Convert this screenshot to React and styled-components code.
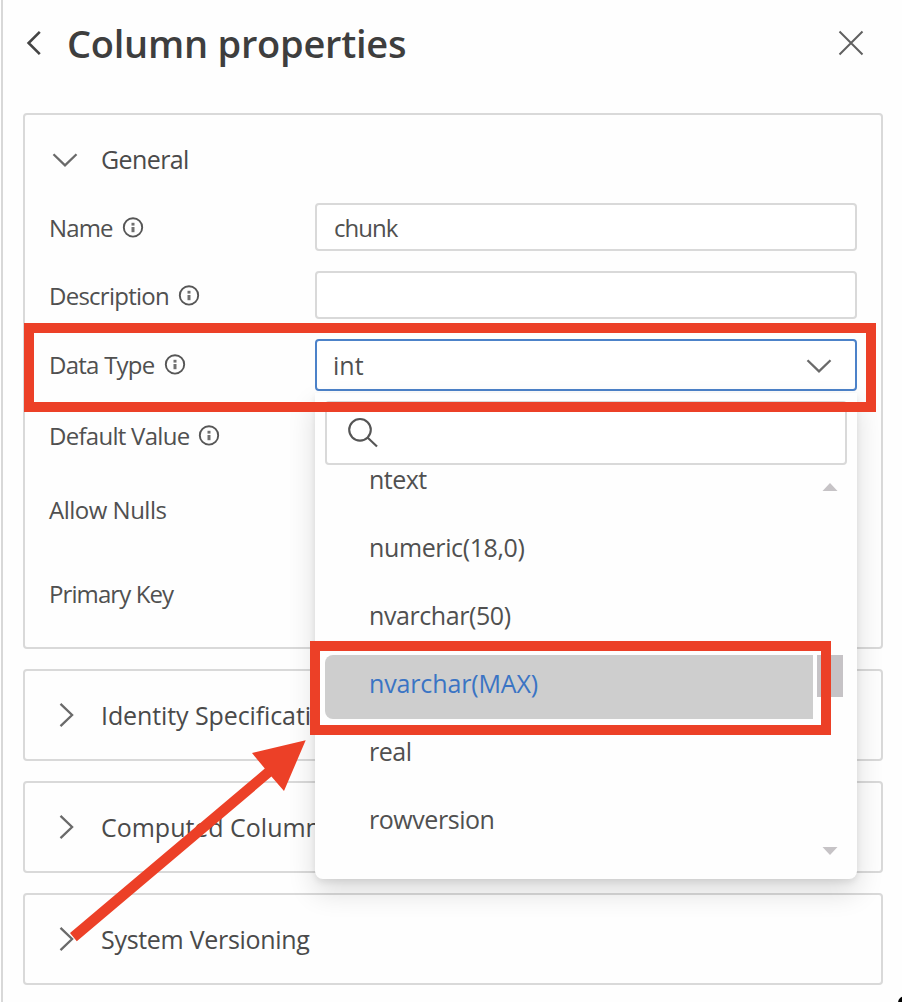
import React from 'react';
import styled, { createGlobalStyle } from 'styled-components';

const RED = '#ec4027';
const LINE = '#d9d9d9';
const FONT = '"Open Sans", "Noto Sans", sans-serif';

const GlobalStyle = createGlobalStyle`
  *, *::before, *::after { box-sizing: border-box; }
  html, body { margin: 0; padding: 0; background: #fff; overflow: hidden; }
`;

const Page = styled.div`
  position: relative;
  width: 902px;
  height: 1002px;
  padding-left: 1px;
  overflow: hidden;
  font-family: ${FONT};
  color: #505050;
`;

const Panel = styled.main`
  height: 100%;
  padding: 0 19px 0 20px;
  border-left: 2px solid #d8d8d8;
  background: #fefefe;
`;

const Text = styled.span`
  flex: none;
  font-size: ${(p) => p.$size || 24}px;
  font-weight: ${(p) => p.$weight || 400};
  letter-spacing: ${(p) => p.$track || 0}px;
  line-height: ${(p) => p.$line || 34}px;
  white-space: pre;
`;

const Header = styled.header`
  display: flex;
  align-items: center;
  height: 113px;
  padding: 0 18px 27px 1px;
  color: #3e3e3e;
`;

const Title = styled.h1`
  flex: 1;
  margin: 0 0 1px 23px;
  font-size: 38px;
  font-weight: 600;
  line-height: 50px;
  letter-spacing: -0.25px;
`;

const IconButton = styled.button`
  display: flex;
  flex: none;
  padding: 0;
  border: 0;
  background: none;
  color: inherit;
`;

const Sections = styled.div`
  display: flex;
  flex-direction: column;
  gap: 20px;
`;

const Card = styled.section`
  width: 860px;
  border: 2px solid ${LINE};
  border-radius: 4px;
  padding: ${(p) => (p.$open ? '0 24px 28px' : '0 24px')};
`;

const CardHeader = styled.div`
  display: flex;
  align-items: center;
  gap: 22px;
  height: 88px;
  overflow: hidden;
  padding: 0 0 ${(p) => p.$lift || 0}px 2px;
  color: #4a4a4a;
`;

const ChevronSlot = styled.span`
  display: flex;
  flex: none;
  width: 28px;
  justify-content: center;
`;

const Field = styled.div`
  display: grid;
  grid-template-columns: 266px 542px;
  align-items: center;
  height: ${(p) => p.$height}px;
  margin-bottom: ${(p) => p.$after}px;
`;

const Label = styled.label`
  display: flex;
  align-items: center;
  gap: 9px;
  padding-top: ${(p) => p.$drop || 0}px;
`;

const Input = styled.div`
  position: relative;
  display: flex;
  align-items: center;
  justify-content: space-between;
  height: 100%;
  padding: ${(p) => (p.$active ? '0 22px 1px 16px' : '2px 24px 0 17px')};
  border: 2px solid ${(p) => (p.$active ? '#4c82c9' : LINE)};
  border-radius: 4px;
  background: #fff;
`;

const Dropdown = styled.div`
  position: absolute;
  z-index: 2;
  top: 52px;
  left: -2px;
  display: flex;
  flex-direction: column;
  width: 542px;
  height: 486px;
  padding: 8px 10px 22px;
  border-radius: 0 0 8px 8px;
  background: #fefefe;
  box-shadow: 0 13px 28px rgba(0, 0, 0, 0.14), 0 3px 6px rgba(0, 0, 0, 0.08);
`;

const Search = styled.div`
  display: flex;
  flex: none;
  align-items: center;
  width: 522px;
  height: 64px;
  padding-left: 20px;
  border: 2px solid ${LINE};
  border-radius: 4px;
  background: #fff;
`;

const ListArea = styled.div`
  display: flex;
  flex: 1;
  gap: 4px;
`;

const Options = styled.div`
  display: flex;
  flex-direction: column;
  gap: 4px;
  width: 488px;
  margin-top: -14px;
`;

const Option = styled.div`
  display: flex;
  flex: none;
  align-items: center;
  height: 64px;
  padding: 0 0 9px 44px;
  border-radius: 8px 0 0 8px;
  background: ${(p) => (p.$selected ? '#cecece' : 'transparent')};
  color: ${(p) => (p.$selected ? '#3a74c4' : 'inherit')};
`;

const Scrollbar = styled.div`
  display: flex;
  flex-direction: column;
  align-items: center;
  justify-content: space-between;
  width: 26px;
  height: 392px;
  padding: 18px 0 2px;
`;

const Thumb = styled.div`
  width: 26px;
  height: 42px;
  margin-bottom: -14px;
  background: #c6c3c6;
`;

const Highlight = styled.div`
  position: absolute;
  z-index: 3;
  top: ${(p) => p.$top}px;
  left: ${(p) => p.$left}px;
  width: ${(p) => p.$width}px;
  height: ${(p) => p.$height}px;
  border: 10px solid ${RED};
  pointer-events: none;
`;

const ArrowOverlay = styled.svg`
  position: absolute;
  z-index: 4;
  top: 735px;
  left: 65px;
  pointer-events: none;
`;

const CornerDot = styled.span`
  position: absolute;
  top: 996px;
  left: 898px;
  width: 14px;
  height: 14px;
  border-radius: 50%;
  background: #000;
`;

const InfoIcon = () => (
  <svg width="22" height="22" viewBox="0 0 22 22">
    <circle cx="11" cy="10.4" r="9.2" fill="none" stroke="#565656" strokeWidth="1.9" />
    <rect x="9.5" y="5.8" width="3" height="2.8" fill="#707070" />
    <rect x="9.5" y="10" width="3" height="5.2" fill="#707070" />
  </svg>
);

const ChevronDown = () => (
  <svg width="28" height="18" viewBox="0 0 28 18" fill="none" stroke="#6a6a6a" strokeWidth="2.3">
    <path d="M2.5 4.2 L14 15.4 L25.5 4.2" />
  </svg>
);

const ChevronRight = () => (
  <svg width="18" height="28" viewBox="0 0 18 28" fill="none" stroke="#6a6a6a" strokeWidth="2.3">
    <path d="M4.5 2.8 L16.1 14 L4.5 25.2" />
  </svg>
);

const ScrollArrow = ({ down }) => (
  <svg width="16" height="8" viewBox="0 0 16 8">
    <path d={down ? 'M0.5 0 H15.5 L8 8 Z' : 'M0.5 8 H15.5 L8 0 Z'} fill="#c6c3c6" />
  </svg>
);

const OPTIONS = [
  ['ntext', -0.5],
  ['numeric(18,0)', -0.38],
  ['nvarchar(50)', -0.42],
  ['nvarchar(MAX)', -0.14],
  ['real', -0.5],
  ['rowversion', -0.45],
];

const SECTIONS = [
  ['Identity Specification', -0.1],
  ['Computed Column', -0.02],
  ['System Versioning', -0.3],
];

function FieldLabel({ text, track, info, drop }) {
  return (
    <Label $drop={drop}>
      <Text $track={track}>{text}</Text>
      {info && <InfoIcon />}
    </Label>
  );
}

function TypeDropdown() {
  return (
    <Dropdown>
      <Search>
        <svg width="32" height="32" viewBox="0 0 32 32" fill="none" stroke="#555" strokeWidth="2.1">
          <circle cx="13" cy="12.8" r="10.8" />
          <path d="M20.5 20.5 L30 29.6" />
        </svg>
      </Search>
      <ListArea>
        <Options>
          {OPTIONS.map(([name, track]) => (
            <Option key={name} $selected={name === 'nvarchar(MAX)'}>
              <Text $size={25} $track={track}>{name}</Text>
            </Option>
          ))}
        </Options>
        <Scrollbar>
          <ScrollArrow />
          <Thumb />
          <ScrollArrow down />
        </Scrollbar>
      </ListArea>
    </Dropdown>
  );
}

export default function App() {
  return (
    <Page>
      <GlobalStyle />
      <Panel>
        <Header>
          <IconButton aria-label="Back">
            <svg width="20" height="28" viewBox="0 0 20 28" fill="none" stroke="#444" strokeWidth="2.6">
              <path d="M15.8 2.8 L4.6 14 L15.8 25.2" />
            </svg>
          </IconButton>
          <Title>Column properties</Title>
          <IconButton aria-label="Close">
            <svg width="28" height="28" viewBox="0 0 28 28" fill="none" stroke="#606060" strokeWidth="2">
              <path d="M2.5 2.5 L25.5 25.5 M25.5 2.5 L2.5 25.5" />
            </svg>
          </IconButton>
        </Header>
        <Sections>
          <Card $open>
            <CardHeader $lift={1}>
              <ChevronSlot><ChevronDown /></ChevronSlot>
              <Text $size={25} $track={-0.6}>General</Text>
            </CardHeader>
            <Field $height={48} $after={20}>
              <FieldLabel text="Name" track={-0.85} info drop={2} />
              <Input><Text $track={-1}>chunk</Text></Input>
            </Field>
            <Field $height={48} $after={20}>
              <FieldLabel text="Description" track={-0.75} info drop={2} />
              <Input />
            </Field>
            <Field $height={52} $after={20}>
              <FieldLabel text="Data Type" track={-0.75} info />
              <Input $active>
                <Text $size={25}>int</Text>
                <ChevronDown />
                <TypeDropdown />
              </Input>
            </Field>
            <Field $height={50} $after={24}>
              <FieldLabel text="Default Value" track={-0.72} info />
            </Field>
            <Field $height={50} $after={34}>
              <FieldLabel text="Allow Nulls" track={-0.5} />
            </Field>
            <Field $height={50} $after={0}>
              <FieldLabel text="Primary Key" track={-0.9} />
            </Field>
          </Card>
          {SECTIONS.map(([name, track]) => (
            <Card key={name}>
              <CardHeader>
                <ChevronSlot><ChevronRight /></ChevronSlot>
                <Text $size={25} $track={track}>{name}</Text>
              </CardHeader>
            </Card>
          ))}
        </Sections>
      </Panel>
      <Highlight $top={323} $left={24} $width={852} $height={89} />
      <Highlight $top={641} $left={310} $width={521} $height={94} />
      <ArrowOverlay width="250" height="215" viewBox="65 735 250 215">
        <path d="M305.7 740.2 L252 753 L264.8 768.6 L70 933 L76.8 941.2 L271.4 776.6 L284 791 Z" fill={RED} />
      </ArrowOverlay>
      <CornerDot />
    </Page>
  );
}
